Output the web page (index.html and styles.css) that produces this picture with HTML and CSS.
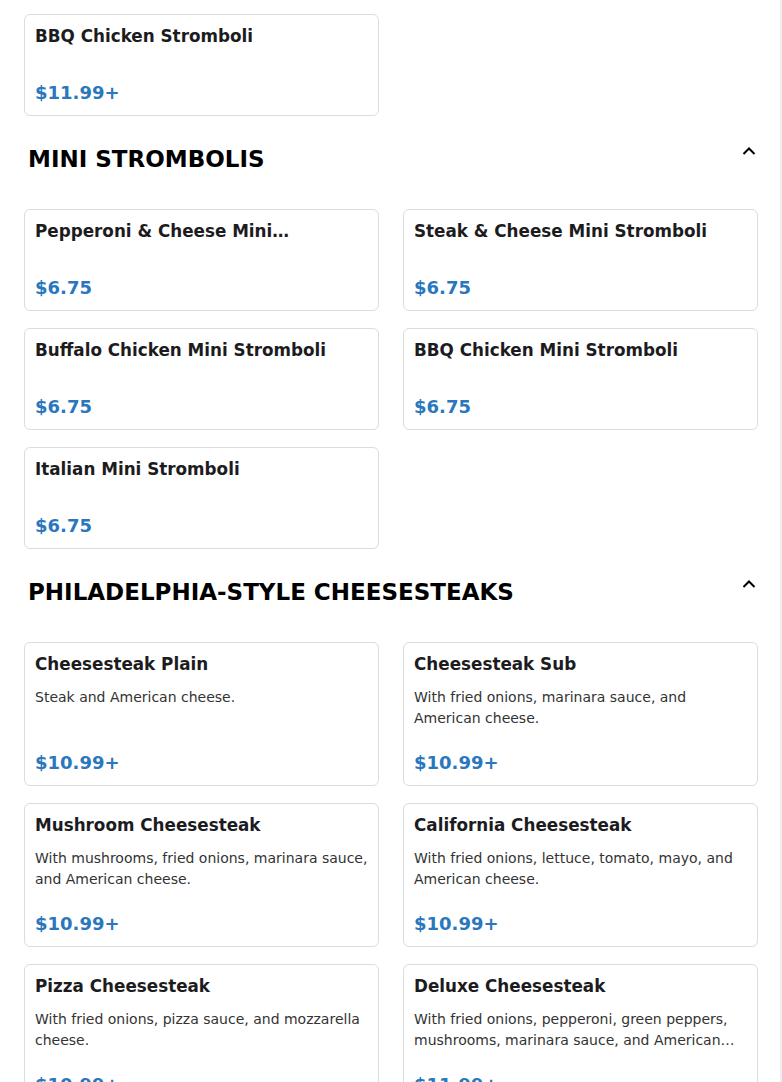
FILE: index.html
```html
<!DOCTYPE html>
<html lang="en">
<head>
<meta charset="UTF-8">
<meta name="viewport" content="width=device-width, initial-scale=1.0">
<title>Menu</title>
<link rel="stylesheet" href="styles.css">
</head>
<body>

<div class="page">

  <div class="section">
    <div class="items">
      <div class="item">
        <div class="item-name">BBQ Chicken Stromboli</div>
        <div class="item-price">$11.99+</div>
      </div>
    </div>
  </div>

  <div class="section">
    <div class="section-head">
      <h2>MINI STROMBOLIS</h2>
      <button class="toggle" aria-label="Collapse">
        <svg width="16" height="16" viewBox="0 0 16 16"><polyline points="2.5,11 8,5.5 13.5,11" fill="none" stroke="#000" stroke-width="2"/></svg>
      </button>
    </div>
    <div class="items">
      <div class="item">
        <div class="item-name">Pepperoni &amp; Cheese Mini Stromboli</div>
        <div class="item-price">$6.75</div>
      </div>
      <div class="item">
        <div class="item-name">Steak &amp; Cheese Mini Stromboli</div>
        <div class="item-price">$6.75</div>
      </div>
      <div class="item">
        <div class="item-name">Buffalo Chicken Mini Stromboli</div>
        <div class="item-price">$6.75</div>
      </div>
      <div class="item">
        <div class="item-name">BBQ Chicken Mini Stromboli</div>
        <div class="item-price">$6.75</div>
      </div>
      <div class="item">
        <div class="item-name">Italian Mini Stromboli</div>
        <div class="item-price">$6.75</div>
      </div>
    </div>
  </div>

  <div class="section">
    <div class="section-head">
      <h2>PHILADELPHIA-STYLE CHEESESTEAKS</h2>
      <button class="toggle" aria-label="Collapse">
        <svg width="16" height="16" viewBox="0 0 16 16"><polyline points="2.5,11 8,5.5 13.5,11" fill="none" stroke="#000" stroke-width="2"/></svg>
      </button>
    </div>
    <div class="items">
      <div class="item">
        <div class="item-name">Cheesesteak Plain</div>
        <div class="item-desc">Steak and American cheese.</div>
        <div class="item-price">$10.99+</div>
      </div>
      <div class="item">
        <div class="item-name">Cheesesteak Sub</div>
        <div class="item-desc">With fried onions, marinara sauce, and American cheese.</div>
        <div class="item-price">$10.99+</div>
      </div>
      <div class="item">
        <div class="item-name">Mushroom Cheesesteak</div>
        <div class="item-desc">With mushrooms, fried onions, marinara sauce, and American cheese.</div>
        <div class="item-price">$10.99+</div>
      </div>
      <div class="item">
        <div class="item-name">California Cheesesteak</div>
        <div class="item-desc">With fried onions, lettuce, tomato, mayo, and American cheese.</div>
        <div class="item-price">$10.99+</div>
      </div>
      <div class="item">
        <div class="item-name">Pizza Cheesesteak</div>
        <div class="item-desc">With fried onions, pizza sauce, and mozzarella cheese.</div>
        <div class="item-price">$10.99+</div>
      </div>
      <div class="item">
        <div class="item-name">Deluxe Cheesesteak</div>
        <div class="item-desc">With fried onions, pepperoni, green peppers, mushrooms, marinara sauce, and American cheese.</div>
        <div class="item-price">$11.99+</div>
      </div>
    </div>
  </div>

</div>

</body>
</html>
```

FILE: styles.css
```css
body {
  margin: 0;
  font-family: 'DejaVu Sans', sans-serif;
  background: #fff;
  color: #1c1c1e;
}
.page {
  padding: 14px 22px 0 24px;
  border-right: 2px solid #eeeeee;
  min-height: 1082px;
  box-sizing: border-box;
}
.section-head {
  display: flex;
  justify-content: space-between;
  align-items: flex-start;
  padding: 28px 1px 35px 4px;
}
.section-head h2 {
  margin: 0;
  font-size: 23px;
  line-height: 30px;
  font-weight: bold;
  color: #000;
}
.toggle {
  background: none;
  border: none;
  padding: 0;
  margin-top: -1px;
  width: 16px;
  height: 16px;
  cursor: pointer;
}
.toggle svg {
  display: block;
}
.items {
  display: grid;
  grid-template-columns: 1fr 1fr;
  column-gap: 24px;
  row-gap: 17px;
}
.item {
  display: flex;
  flex-direction: column;
  border: 1px solid #dcdcdc;
  border-radius: 6px;
  padding: 9px 10px 10px;
  background: #fff;
  min-width: 0;
}
.item-name {
  font-size: 16.8px;
  font-weight: bold;
  line-height: 24px;
  margin-bottom: 11px;
  display: -webkit-box;
  -webkit-line-clamp: 1;
  -webkit-box-orient: vertical;
  overflow: hidden;
}
.item-desc {
  font-size: 14px;
  line-height: 21px;
  color: #333;
  display: -webkit-box;
  -webkit-line-clamp: 2;
  -webkit-box-orient: vertical;
  overflow: hidden;
}
.item-price {
  margin-top: auto;
  padding-top: 22px;
  font-size: 18px;
  line-height: 24px;
  font-weight: bold;
  color: #2a77bd;
}
```
